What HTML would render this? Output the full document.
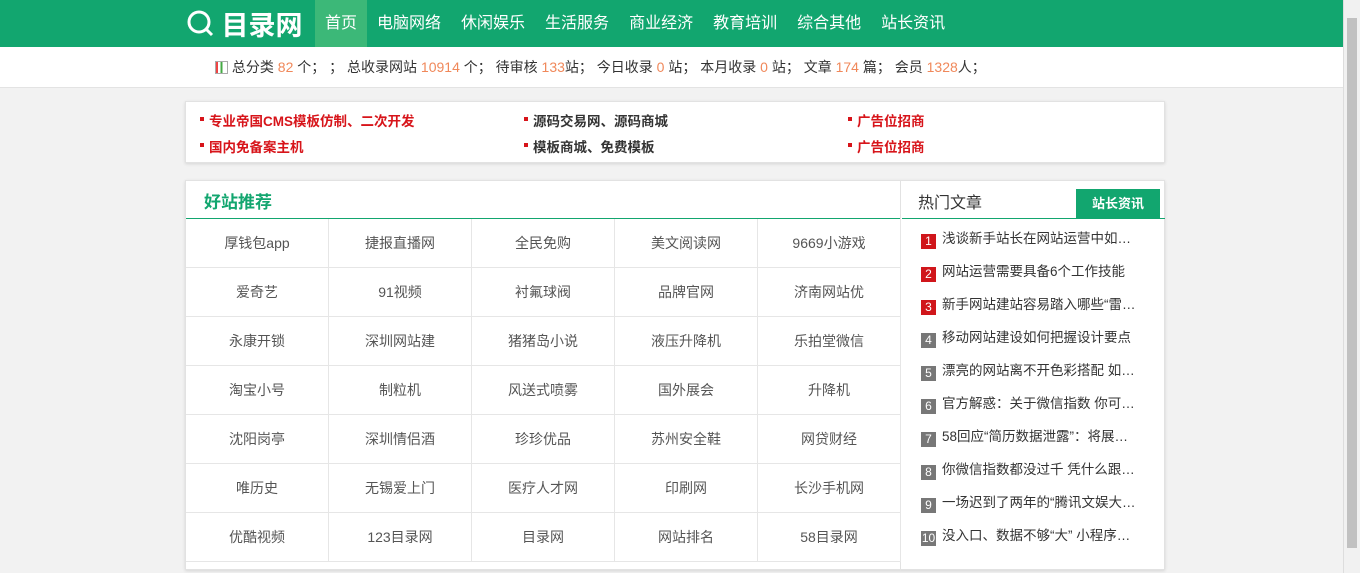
<!DOCTYPE html><html><head><meta charset="utf-8"><style>
*{margin:0;padding:0;box-sizing:border-box}
body{width:1360px;height:573px;overflow:hidden;background:#f2f2f2;font-family:"Liberation Sans","Noto Sans CJK SC",sans-serif;font-size:14px;color:#333;position:relative}
.top{height:47px;background:#12a66f;position:relative}
.logo{position:absolute;left:186px;top:4px;color:#fff;font-size:27px;font-weight:bold;display:flex;align-items:center;height:38px}
.nav{position:absolute;left:315px;top:0;display:flex}
.nav a{color:#fff;font-size:16px;line-height:47px;padding:0 10px;text-decoration:none}
.nav a.on{background:#3cb878}
.stat{height:41px;background:#fff;border-bottom:1px solid #e3e3e3;font-size:14px;line-height:41px;padding-left:215px;color:#333}
.stat i{font-style:normal;color:#f0885a}
.box{position:absolute;left:185px;width:980px;background:#fff;border:1px solid #e2e2e2;box-shadow:0 1px 3px rgba(0,0,0,.12)}
.ad{top:101px;height:62px}
.ad span{position:absolute;font-size:13.5px;font-weight:bold;color:#333}
.ad span.r{color:#d7141a}
.ad span:before{content:"";position:absolute;left:-9px;top:7px;width:4px;height:4px;background:#d7141a}
.main{top:180px;height:390px}
.left{position:absolute;left:0;top:0;width:715px;height:390px;border-right:1px solid #e2e2e2}
.lt{height:38px;border-bottom:1px solid #12a66f;font-size:17px;font-weight:bold;color:#12a66f;padding:7px 0 0 18px}
.grid{display:grid;grid-template-columns:repeat(5,143px)}
.grid div{height:49px;line-height:48px;text-align:center;border-right:1px solid #e6e6e6;border-bottom:1px solid #e6e6e6;color:#555;font-size:14px}
.right{position:absolute;left:716px;top:0;width:263px}
.rt{height:38px;border-bottom:1px solid #12a66f;position:relative;font-size:16px;color:#333;padding:8px 0 0 16px}
.rt b{position:absolute;right:5px;top:8px;width:84px;height:30px;background:#12a66f;color:#fff;font-size:13px;line-height:30px;text-align:center}
.li{height:33px;line-height:33px;padding-left:19px;font-size:13.5px;color:#333;white-space:nowrap}
.li em{display:inline-block;width:15px;height:15px;line-height:15px;background:#777;color:#fff;font-style:normal;font-size:12px;text-align:center;margin-right:6px;vertical-align:-2px}
.li em.r{background:#d0161b}
.sb{position:absolute;right:0;top:0;width:17px;height:573px;background:#f1f1f1;border-left:1px solid #ddd}
.sb:after{content:"";position:absolute;left:3px;top:18px;width:10px;height:530px;background:#c1c1c1}
</style></head><body>
<div class="top"><div class="logo"><svg width="28" height="28" viewBox="0 0 28 28"><circle cx="13" cy="13" r="10" fill="none" stroke="#fff" stroke-width="3"/><path d="M20 20l6 6" stroke="#fff" stroke-width="3"/></svg>&nbsp;目录网</div>
<div class="nav"><a class="on">首页</a><a>电脑网络</a><a>休闲娱乐</a><a>生活服务</a><a>商业经济</a><a>教育培训</a><a>综合其他</a><a>站长资讯</a></div></div>
<div class="stat"><span style="display:inline-block;width:13px;height:13px;border:1px solid #aaa;vertical-align:-2px;background:linear-gradient(90deg,#e44 20%,#fff 20%,#fff 40%,#4a4 40%,#4a4 60%,#fff 60%)"></span> 总分类 <i>82</i> 个； ； 总收录网站 <i>10914</i> 个； 待审核 <i>133</i>站； 今日收录 <i>0</i> 站； 本月收录 <i>0</i> 站； 文章 <i>174</i> 篇； 会员 <i>1328</i>人；</div>
<div class="box ad">
<span class="r" style="left:23px;top:8px">专业帝国CMS模板仿制、二次开发</span>
<span class="r" style="left:23px;top:34px">国内免备案主机</span>
<span style="left:347px;top:8px">源码交易网、源码商城</span>
<span style="left:347px;top:34px">模板商城、免费模板</span>
<span class="r" style="left:671px;top:8px">广告位招商</span>
<span class="r" style="left:671px;top:34px">广告位招商</span>
</div>
<div class="box main">
<div class="left"><div class="lt">好站推荐</div><div class="grid">
<div>厚钱包app</div><div>捷报直播网</div><div>全民免购</div><div>美文阅读网</div><div>9669小游戏</div>
<div>爱奇艺</div><div>91视频</div><div>衬氟球阀</div><div>品牌官网</div><div>济南网站优</div>
<div>永康开锁</div><div>深圳网站建</div><div>猪猪岛小说</div><div>液压升降机</div><div>乐拍堂微信</div>
<div>淘宝小号</div><div>制粒机</div><div>风送式喷雾</div><div>国外展会</div><div>升降机</div>
<div>沈阳岗亭</div><div>深圳情侣酒</div><div>珍珍优品</div><div>苏州安全鞋</div><div>网贷财经</div>
<div>唯历史</div><div>无锡爱上门</div><div>医疗人才网</div><div>印刷网</div><div>长沙手机网</div>
<div>优酷视频</div><div>123目录网</div><div>目录网</div><div>网站排名</div><div>58目录网</div>
</div></div>
<div class="right"><div class="rt">热门文章<b>站长资讯</b></div><div style="height:3px"></div>
<div class="li"><em class="r">1</em>浅谈新手站长在网站运营中如…</div>
<div class="li"><em class="r">2</em>网站运营需要具备6个工作技能</div>
<div class="li"><em class="r">3</em>新手网站建站容易踏入哪些“雷…</div>
<div class="li"><em>4</em>移动网站建设如何把握设计要点</div>
<div class="li"><em>5</em>漂亮的网站离不开色彩搭配 如…</div>
<div class="li"><em>6</em>官方解惑：关于微信指数 你可…</div>
<div class="li"><em>7</em>58回应“简历数据泄露”：将展…</div>
<div class="li"><em>8</em>你微信指数都没过千 凭什么跟…</div>
<div class="li"><em>9</em>一场迟到了两年的“腾讯文娱大…</div>
<div class="li"><em>10</em>没入口、数据不够“大” 小程序…</div>
</div></div>
<div class="sb"></div>
</body></html>
